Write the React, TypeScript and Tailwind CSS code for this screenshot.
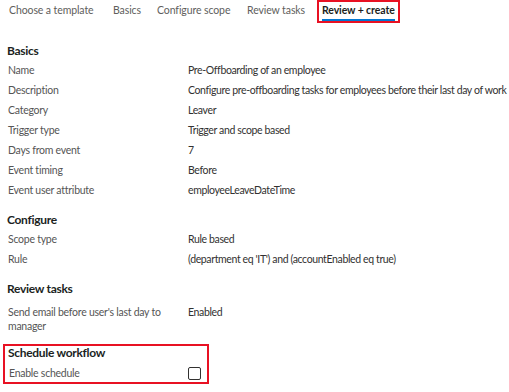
const tabs: [string, string][] = [
  ["Choose a template", "w-[104px]"],
  ["Basics", "w-[44px]"],
  ["Configure scope", "w-[90px]"],
  ["Review tasks", "w-[70px]"],
];

const basics: [string, string][] = [
  ["Name", "Pre-Offboarding of an employee"],
  ["Description", "Configure pre-offboarding tasks for employees before their last day of work"],
  ["Category", "Leaver"],
  ["Trigger type", "Trigger and scope based"],
  ["Days from event", "7"],
  ["Event timing", "Before"],
  ["Event user attribute", "employeeLeaveDateTime"],
];

const configure: [string, string][] = [
  ["Scope type", "Rule based"],
  ["Rule", "(department eq 'IT') and (accountEnabled eq true)"],
];

function Row({ label, value }: { label: string; value: string }) {
  return (
    <div className="flex h-[20px] items-center">
      <div className="w-[188px] shrink-0 pl-[8px] text-[#555]">{label}</div>
      <div className="whitespace-nowrap tracking-[-0.37px] text-[#323130]">{value}</div>
    </div>
  );
}

function Heading({ children }: { children: string }) {
  return (
    <div className="flex h-[21px] items-center pl-[7px] text-[12px] font-bold tracking-[-0.3px] text-[#201f1e]">
      {children}
    </div>
  );
}

export default function App() {
  return (
    <div
      className="h-[392px] w-[509px] overflow-hidden bg-white text-[10.5px] tracking-[-0.25px]"
      style={{ fontFamily: 'Lato, "Noto Sans", sans-serif' }}
    >
      <div className="flex h-[26px] items-start pl-[9px] tracking-[-0.1px]">
        {tabs.map(([t, w]) => (
          <div key={t} className={`${w} flex h-[21px] shrink-0 items-center text-[#605e5c]`}>
            {t}
          </div>
        ))}
        <div className="border-2 border-[#e81123] px-[3px]">
          <div className="flex h-[19px] items-center border-b-2 border-[#0078d4] font-bold text-[#201f1e]">
            Review + create
          </div>
        </div>
      </div>

      <div className="mt-[14px]">
        <Heading>Basics</Heading>
        {basics.map(([l, v]) => (
          <Row key={l} label={l} value={v} />
        ))}
      </div>

      <div className="mt-[8px]">
        <Heading>Configure</Heading>
        {configure.map(([l, v]) => (
          <Row key={l} label={l} value={v} />
        ))}
      </div>

      <div className="mt-[8px]">
        <Heading>Review tasks</Heading>
        <div className="flex pt-[6px] leading-[14px]">
          <div className="w-[188px] shrink-0 pl-[8px] pr-[8px] text-[#555]">
            Send email before user's last day to manager
          </div>
          <div className="tracking-[-0.37px] text-[#323130]">Enabled</div>
        </div>
      </div>

      <div className="ml-[3px] mt-[11px] w-[206px] border-2 border-[#e81123]">
        <div className="flex h-[14px] items-center pl-[3px] text-[12px] font-bold tracking-[-0.3px] text-[#201f1e]">
          Schedule workflow
        </div>
        <div className="flex h-[22px] items-center pt-[6px]">
          <div className="w-[183px] shrink-0 pl-[4px] text-[#555]">Enable schedule</div>
          <div className="-mt-[2px] h-[13px] w-[13px] rounded-[2px] border border-[#323130]" />
        </div>
      </div>
    </div>
  );
}
